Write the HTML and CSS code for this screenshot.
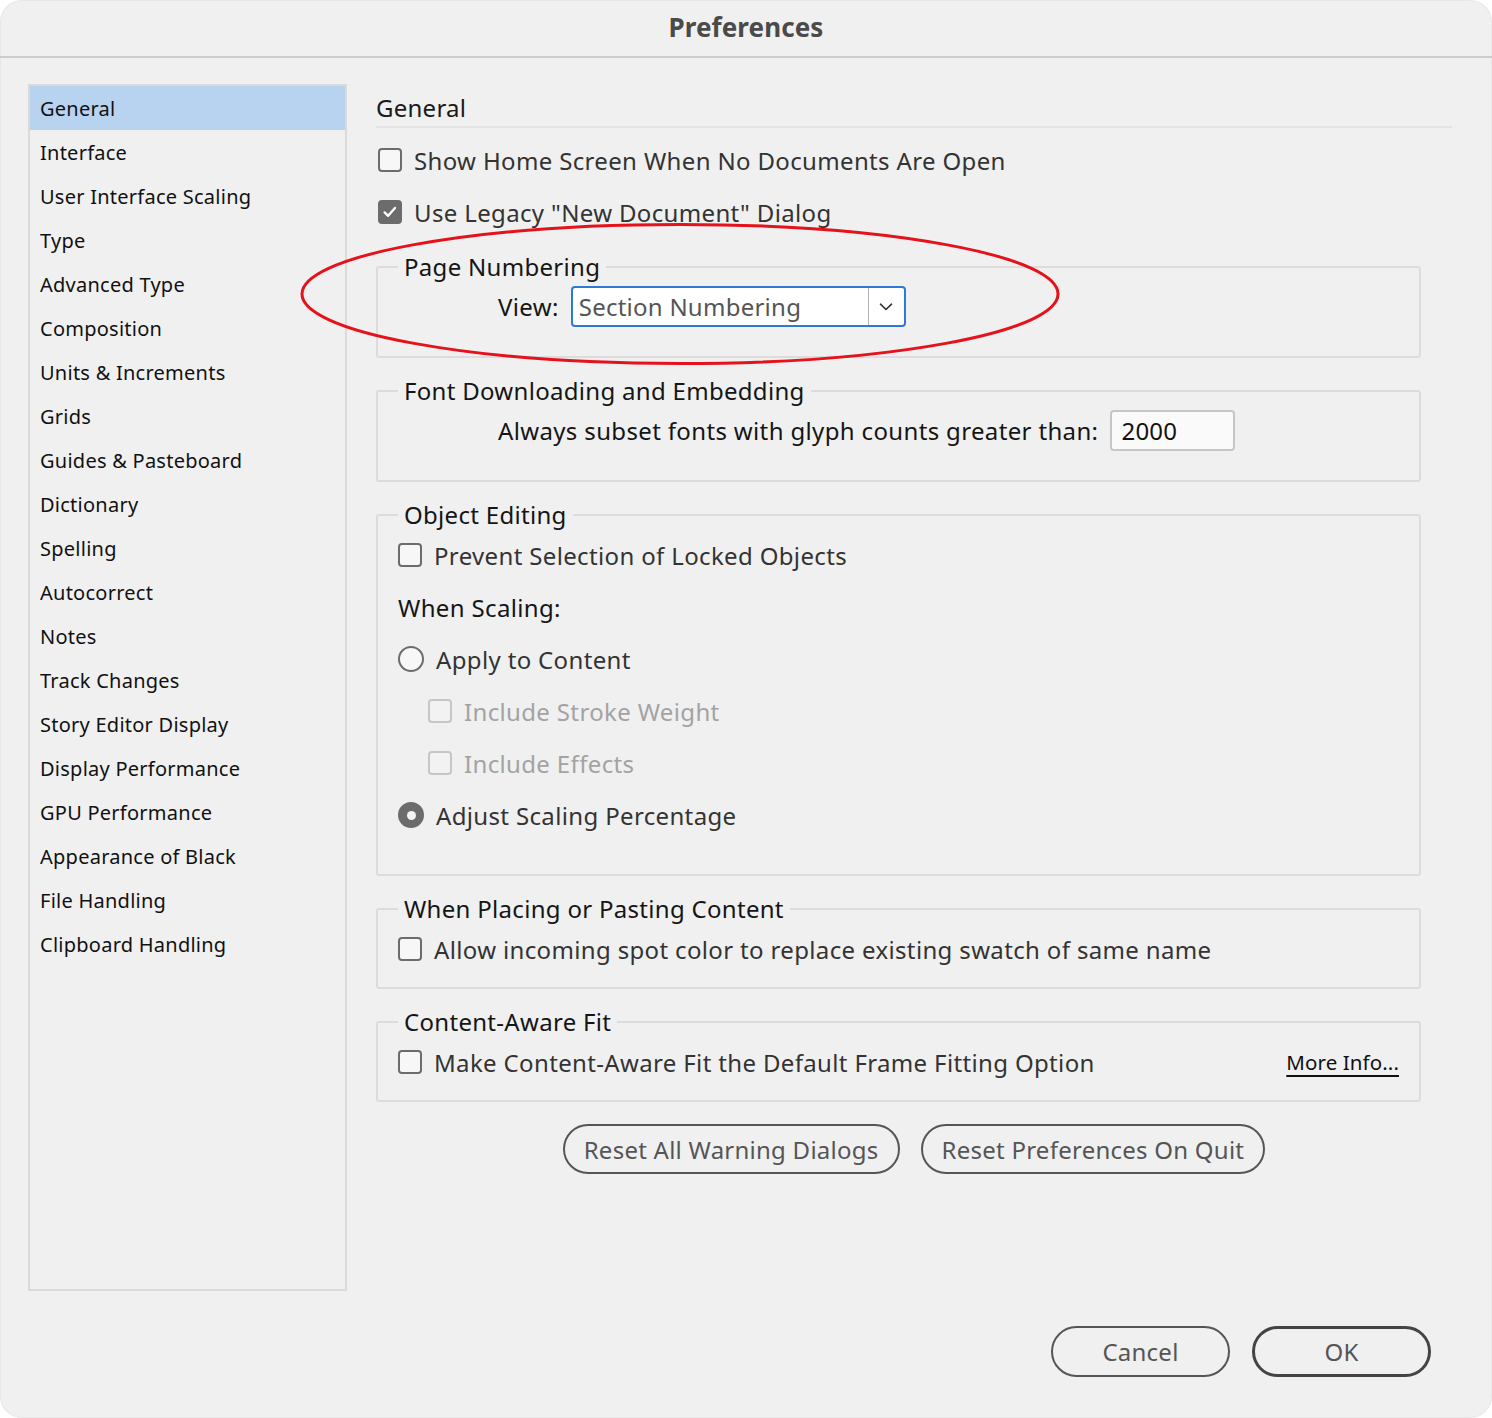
FILE: index.html
```html
<!DOCTYPE html>
<html lang="en">
<head>
<meta charset="utf-8">
<title>Preferences</title>
<link rel="stylesheet" href="styles.css">
</head>
<body>
<div class="dialog">
  <div class="titlebar">Preferences</div>
  <div class="body">
    <ul class="sidebar">
      <li class="selected">General</li>
      <li>Interface</li>
      <li>User Interface Scaling</li>
      <li>Type</li>
      <li>Advanced Type</li>
      <li>Composition</li>
      <li>Units &amp; Increments</li>
      <li>Grids</li>
      <li>Guides &amp; Pasteboard</li>
      <li>Dictionary</li>
      <li>Spelling</li>
      <li>Autocorrect</li>
      <li>Notes</li>
      <li>Track Changes</li>
      <li>Story Editor Display</li>
      <li>Display Performance</li>
      <li>GPU Performance</li>
      <li>Appearance of Black</li>
      <li>File Handling</li>
      <li>Clipboard Handling</li>
    </ul>
    <div class="main">
      <h1 class="heading">General</h1>
      <div class="row top">
        <span class="cb"></span><span class="label">Show Home Screen When No Documents Are Open</span>
      </div>
      <div class="row top">
        <span class="cb checked"><svg viewBox="0 0 24 24" width="20" height="20"><path d="M5.5 12.5 L9.8 16.6 L18 7.2" fill="none" stroke="#fff" stroke-width="2.8" stroke-linecap="round" stroke-linejoin="round"/></svg></span><span class="label">Use Legacy "New Document" Dialog</span>
      </div>

      <fieldset class="group first tall">
        <legend>Page Numbering</legend>
        <div class="inline-row">
          <span class="dark">View:</span>
          <div class="select">
            <span class="select-text">Section Numbering</span>
            <span class="select-arrow"><svg viewBox="0 0 14 8" width="14" height="8"><path d="M1.5 1.2 L7 6.5 L12.5 1.2" fill="none" stroke="#333" stroke-width="1.6" stroke-linecap="round" stroke-linejoin="round"/></svg></span>
          </div>
        </div>
      </fieldset>

      <fieldset class="group tall">
        <legend>Font Downloading and Embedding</legend>
        <div class="inline-row">
          <span class="dark">Always subset fonts with glyph counts greater than:</span>
          <div class="textbox">2000</div>
        </div>
      </fieldset>

      <fieldset class="group object">
        <legend>Object Editing</legend>
        <div class="row">
          <span class="cb"></span><span class="label">Prevent Selection of Locked Objects</span>
        </div>
        <div class="row"><span class="dark">When Scaling:</span></div>
        <div class="row">
          <span class="radio"></span><span class="label">Apply to Content</span>
        </div>
        <div class="row indent disabled">
          <span class="cb"></span><span class="label">Include Stroke Weight</span>
        </div>
        <div class="row indent disabled">
          <span class="cb"></span><span class="label">Include Effects</span>
        </div>
        <div class="row">
          <span class="radio on"></span><span class="label">Adjust Scaling Percentage</span>
        </div>
      </fieldset>

      <fieldset class="group short">
        <legend>When Placing or Pasting Content</legend>
        <div class="row">
          <span class="cb"></span><span class="label">Allow incoming spot color to replace existing swatch of same name</span>
        </div>
      </fieldset>

      <fieldset class="group short">
        <legend>Content-Aware Fit</legend>
        <div class="row">
          <span class="cb"></span><span class="label">Make Content-Aware Fit the Default Frame Fitting Option</span>
          <a class="more" href="#">More Info...</a>
        </div>
      </fieldset>

      <div class="resets">
        <button class="pill">Reset All Warning Dialogs</button>
        <button class="pill">Reset Preferences On Quit</button>
      </div>
    </div>
  </div>
  <div class="footer">
    <button class="pill wide">Cancel</button>
    <button class="pill wide default">OK</button>
  </div>
  <svg class="annotation" width="762" height="144" viewBox="0 0 762 144"><ellipse cx="381" cy="72" rx="378" ry="69.5" fill="none" stroke="#e5121c" stroke-width="3"/></svg>
</div>
</body>
</html>
```

FILE: styles.css
```css
* { box-sizing: border-box; }
html, body { margin: 0; padding: 0; background: #ffffff; }
body {
  font-family: "Noto Sans", "DejaVu Sans", sans-serif;
  color: #1a1a1a;
}
.dialog {
  position: relative;
  width: 1492px;
  height: 1418px;
  background: #f0f0f0;
  border-radius: 22px;
  box-shadow: inset 0 0 0 1px #e8e8e8;
  display: flex;
  flex-direction: column;
  overflow: hidden;
}
.titlebar {
  height: 58px;
  border-bottom: 2px solid #cccccc;
  text-align: center;
  font-weight: 700;
  font-size: 26px;
  line-height: 54px;
  color: #4a4a4a;
  letter-spacing: 0.1px;
}
.body {
  display: flex;
  padding: 26px 40px 0 28px;
}
.sidebar {
  list-style: none;
  margin: 0;
  padding: 0;
  width: 319px;
  height: 1207px;
  border: 2px solid #dadada;
  flex: none;
}
.sidebar li {
  height: 44px;
  line-height: 45px;
  padding-left: 10px;
  font-size: 20px;
  letter-spacing: 0.25px;
  color: #111;
}
.sidebar li.selected { background: #b8d3ef; }
.main {
  flex: 1;
  margin-left: 29px;
  display: flex;
  flex-direction: column;
}
.heading {
  margin: 0;
  font-weight: 400;
  font-size: 24px;
  letter-spacing: 0.25px;
  line-height: 30px;
  padding: 9px 0 3px 0;
  border-bottom: 2px solid #e4e4e4;
  color: #1a1a1a;
  margin-bottom: 6px;
}
.row {
  height: 52px;
  display: flex;
  align-items: center;
  font-size: 24px;
  letter-spacing: 0.35px;
  color: #333;
}
.row.top { padding-left: 2px; }
.row .label { margin-left: 12px; }
.dark { color: #151515; font-size: 24px; letter-spacing: 0.35px; }
.cb {
  width: 24px;
  height: 24px;
  border: 2px solid #6c6c6c;
  border-radius: 4px;
  background: #f7f7f7;
  flex: none;
  display: flex;
  align-items: center;
  justify-content: center;
}
.cb.checked { background: #6c6c6c; }
.cb svg { display: block; }
.radio {
  width: 26px;
  height: 26px;
  border: 2px solid #6c6c6c;
  border-radius: 50%;
  background: #f7f7f7;
  flex: none;
  position: relative;
}
.radio.on {
  background: #6c6c6c;
  display: flex;
  align-items: center;
  justify-content: center;
}
.radio.on::after {
  content: "";
  width: 9px;
  height: 9px;
  border-radius: 50%;
  background: #f4f4f4;
}
.indent { padding-left: 30px; }
.disabled { color: #a3a3a3; }
.disabled .cb { border-color: #c6c6c6; background: #f2f2f2; }

.group {
  margin: 0 31px 0 0;
  border: 2px solid #dcdcdc;
  border-radius: 3px;
  padding: 0 20px 12px 20px;
}
.group + .group { margin-top: 19px; }
.group.first { margin-top: 15px; }
.group + .group.tall { margin-top: 19px; }
.group legend {
  padding: 0 6px;
  font-size: 24px;
  letter-spacing: 0.3px;
  line-height: 28px;
  color: #151515;
}
.group.tall { padding-top: 5px; padding-bottom: 29px; }
.group.object { padding-top: 0; padding-bottom: 33px; }
.group.short { padding-top: 0; padding-bottom: 12px; }
.inline-row {
  display: flex;
  align-items: center;
  padding-left: 100px;
  height: 41px;
}
.select {
  margin-left: 12px;
  width: 335px;
  height: 41px;
  border: 2px solid #2c7ad6;
  border-radius: 4px;
  background: #ffffff;
  display: flex;
  align-items: center;
}
.select-text {
  flex: 1;
  padding-left: 6px;
  font-size: 24px;
  letter-spacing: 0.25px;
  color: #555;
}
.select-arrow {
  width: 36px;
  height: 100%;
  border-left: 1px solid #b3b3b3;
  display: flex;
  align-items: center;
  justify-content: center;
}
.select-arrow svg { display: block; }
.textbox {
  margin-left: 12px;
  width: 125px;
  height: 41px;
  border: 2px solid #c6c6c6;
  border-radius: 4px;
  background: #fafafa;
  padding-left: 9px;
  font-size: 24px;
  line-height: 37px;
  letter-spacing: 0.25px;
  color: #111;
}
.more {
  margin-left: auto;
  margin-right: 0;
  font-size: 20.5px;
  color: #111;
  text-decoration: underline;
  text-decoration-thickness: 2px;
  text-underline-offset: 5px;
  letter-spacing: 0.1px;
}
.resets {
  display: flex;
  justify-content: center;
  gap: 21px;
  margin-top: 22px;
}
.pill {
  height: 50px;
  border: 2px solid #555;
  border-radius: 26px;
  background: #f0f0f0;
  font-family: "Noto Sans", "DejaVu Sans", sans-serif;
  font-size: 24px;
  letter-spacing: 0.25px;
  color: #555;
  padding: 0 19px;
}
.footer {
  display: flex;
  justify-content: flex-end;
  gap: 22px;
  padding: 35px 61px 0 0;
}
.pill.wide { width: 179px; height: 51px; padding: 0; }
.pill.default { border: 3px solid #444; }
.annotation {
  position: absolute;
  left: 299px;
  top: 222px;
}
```
